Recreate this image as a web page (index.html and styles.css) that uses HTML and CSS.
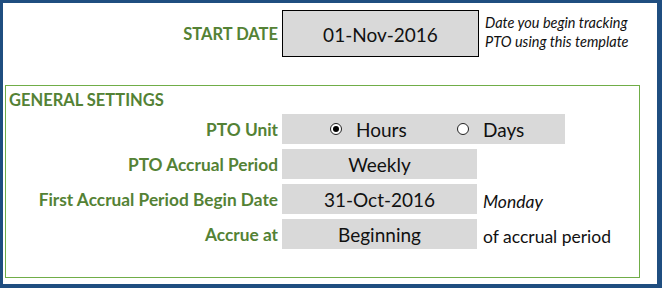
FILE: index.html
```html
<!DOCTYPE html>
<html lang="en">

<head>
    <meta charset="UTF-8">
    <meta name="viewport" content="width=device-width, initial-scale=1.0">
    <title>PTO Settings</title>
    <link rel="stylesheet" href="styles.css">
</head>

<body>

    <div class="sheet">
        <div class="start-row">
            <div class="label">START DATE</div>
            <div class="start-box">01-Nov-2016</div>
            <div class="start-note">Date you begin tracking<br>PTO using this template</div>
        </div>

        <section class="settings">
            <h2 class="settings-title">GENERAL SETTINGS</h2>
            <div class="settings-grid">
                <div class="label row-label">PTO Unit</div>
                <div class="cell cell-wide">
                    <span class="option option-first"><span class="radio checked"></span>Hours</span>
                    <span class="option"><span class="radio"></span>Days</span>
                </div>

                <div class="label row-label">PTO Accrual Period</div>
                <div class="cell">Weekly</div>
                <div class="note"></div>

                <div class="label row-label">First Accrual Period Begin Date</div>
                <div class="cell">31-Oct-2016</div>
                <div class="note note-italic">Monday</div>

                <div class="label row-label">Accrue at</div>
                <div class="cell">Beginning</div>
                <div class="note">of accrual period</div>
            </div>
        </section>
    </div>

</body>

</html>
```

FILE: styles.css
```css
* {
    box-sizing: border-box;
}

body {
    margin: 0;
    font-family: 'Lato', 'Liberation Sans', sans-serif;
    color: #111;
    background: #fff;
}

.sheet {
    width: 662px;
    height: 288px;
    border-style: solid;
    border-color: #1f4e80;
    border-width: 3px 5px 4px 3px;
    background: #fff;
}

.label {
    font-size: 16.5px;
    font-weight: bold;
    color: #548235;
    text-align: right;
    display: flex;
    align-items: center;
    justify-content: flex-end;
}

.row-label {
    font-size: 17.3px;
}

/* start date */
.start-row {
    display: grid;
    grid-template-columns: 275px 197px 1fr;
    column-gap: 4px;
    margin-top: 7px;
    height: 47px;
}

.start-box {
    border: 1px solid #000;
    background: #d9d9d9;
    font-size: 19px;
    display: flex;
    align-items: center;
    justify-content: center;
    padding-top: 1px;
}

.start-note {
    font-size: 14.5px;
    font-style: italic;
    line-height: 19px;
    padding-left: 2px;
    padding-top: 3px;
}

/* general settings */
.settings {
    margin: 28px 0 0 2px;
    width: 635px;
    height: 193px;
    border: 1px solid #70ad47;
}

.settings-title {
    margin: 0;
    padding-left: 3px;
    height: 28px;
    line-height: 28px;
    font-size: 16.5px;
    font-weight: bold;
    color: #548235;
}

.settings-grid {
    display: grid;
    grid-template-columns: 272px 195px 1fr;
    grid-auto-rows: 30px;
    column-gap: 4px;
    row-gap: 5px;
}

.cell {
    background: #d9d9d9;
    font-size: 19px;
    display: flex;
    align-items: center;
    justify-content: center;
}

.cell-wide {
    grid-column: span 2;
    width: 283px;
    justify-content: flex-start;
    padding-left: 48px;
}

.option {
    display: flex;
    align-items: center;
    gap: 14px;
}

.option-first {
    width: 127px;
}

.radio {
    width: 12px;
    height: 12px;
    border: 1px solid #222;
    border-radius: 50%;
    background: #fff;
    display: flex;
    align-items: center;
    justify-content: center;
}

.radio.checked::after {
    content: "";
    width: 6px;
    height: 6px;
    border-radius: 50%;
    background: #000;
}

.note {
    font-size: 17.5px;
    display: flex;
    align-items: center;
    padding: 4px 0 0 2px;
}

.note-italic {
    font-style: italic;
}
```
